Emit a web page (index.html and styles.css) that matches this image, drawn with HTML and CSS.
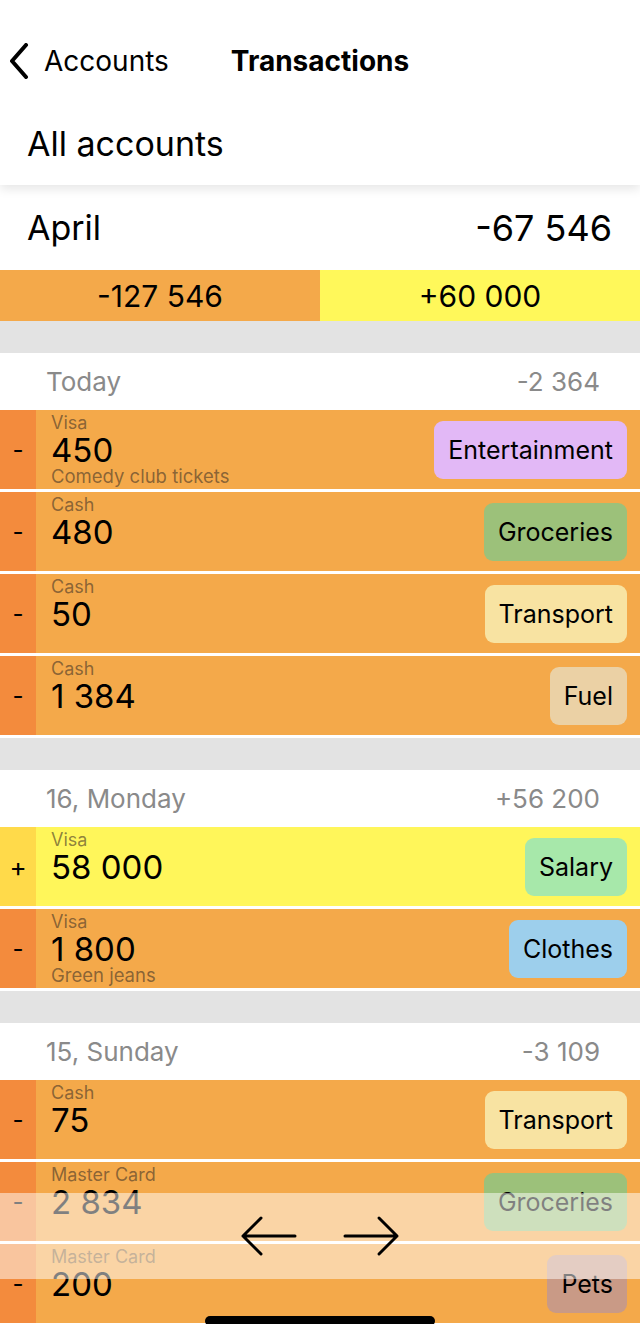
FILE: index.html
```html
<!DOCTYPE html>
<html>
<head>
<meta charset="utf-8">
<link rel="stylesheet" href="styles.css">
</head>
<body>
<div class="screen">
  <header class="header">
    <div class="nav">
      <div class="back">
        <svg class="chev" width="20" height="36" viewBox="0 0 20 36"><path d="M16 2 L2 18 L16 34" fill="none" stroke="#000" stroke-width="4" stroke-linecap="round" stroke-linejoin="round"/></svg>
        <span>Accounts</span>
      </div>
      <div class="nav-title">Transactions</div>
    </div>
    <div class="page-title">All accounts</div>
  </header>

  <div class="month">
    <span>April</span>
    <span class="month-total">-67 546</span>
  </div>
  <div class="split">
    <div class="split-out">-127 546</div>
    <div class="split-in">+60 000</div>
  </div>
  <div class="gap"></div>

  <div class="day"><span>Today</span><span>-2 364</span></div>
  <div class="tx out">
    <div class="sign">-</div>
    <div class="info"><div class="acct">Visa</div><div class="amt">450</div><div class="note">Comedy club tickets</div></div>
    <div class="tag ent">Entertainment</div>
  </div>
  <div class="tx out">
    <div class="sign">-</div>
    <div class="info"><div class="acct">Cash</div><div class="amt">480</div></div>
    <div class="tag gro">Groceries</div>
  </div>
  <div class="tx out">
    <div class="sign">-</div>
    <div class="info"><div class="acct">Cash</div><div class="amt">50</div></div>
    <div class="tag tra">Transport</div>
  </div>
  <div class="tx out">
    <div class="sign">-</div>
    <div class="info"><div class="acct">Cash</div><div class="amt">1 384</div></div>
    <div class="tag fue">Fuel</div>
  </div>
  <div class="gap"></div>

  <div class="day"><span>16, Monday</span><span>+56 200</span></div>
  <div class="tx in">
    <div class="sign">+</div>
    <div class="info"><div class="acct">Visa</div><div class="amt">58 000</div></div>
    <div class="tag sal">Salary</div>
  </div>
  <div class="tx out">
    <div class="sign">-</div>
    <div class="info"><div class="acct">Visa</div><div class="amt">1 800</div><div class="note">Green jeans</div></div>
    <div class="tag clo">Clothes</div>
  </div>
  <div class="gap"></div>

  <div class="day"><span>15, Sunday</span><span>-3 109</span></div>
  <div class="tx out">
    <div class="sign">-</div>
    <div class="info"><div class="acct">Cash</div><div class="amt">75</div></div>
    <div class="tag tra">Transport</div>
  </div>
  <div class="tx out">
    <div class="sign">-</div>
    <div class="info"><div class="acct">Master Card</div><div class="amt">2 834</div></div>
    <div class="tag gro">Groceries</div>
  </div>
  <div class="tx out">
    <div class="sign">-</div>
    <div class="info"><div class="acct">Master Card</div><div class="amt">200</div></div>
    <div class="tag pet">Pets</div>
  </div>

  <div class="pager">
    <svg width="160" height="44" viewBox="0 0 160 44">
      <path d="M3 22 H55 M21 4 L3 22 L21 40" fill="none" stroke="#000" stroke-width="3" stroke-linecap="round" stroke-linejoin="round"/>
      <path d="M105 22 H157 M139 4 L157 22 L139 40" fill="none" stroke="#000" stroke-width="3" stroke-linecap="round" stroke-linejoin="round"/>
    </svg>
  </div>
  <div class="home-bar"></div>
</div>
</body>
</html>
```

FILE: styles.css
```css
* { box-sizing: border-box; }
html, body { margin: 0; padding: 0; }
body {
  width: 640px;
  height: 1324px;
  overflow: hidden;
  background: #fff;
  font-family: "Inter", "Roboto", "Liberation Sans", sans-serif;
  color: #000;
}
.screen { position: relative; width: 640px; height: 1324px; overflow: hidden; }

.header {
  position: relative;
  z-index: 2;
  background: #fff;
  padding-top: 38px;
  height: 185px;
  box-shadow: 0 4px 10px rgba(0,0,0,0.10);
}
.nav {
  position: relative;
  height: 46px;
  display: flex;
  align-items: center;
}
.back {
  display: flex;
  align-items: center;
  padding-left: 10px;
  gap: 14px;
  font-size: 28px;
}
.chev { display: block; }
.nav-title {
  position: absolute;
  left: 0; right: 0;
  text-align: center;
  font-size: 28px;
  font-weight: 700;
  pointer-events: none;
}
.page-title {
  padding: 40px 0 0 27px;
  font-size: 34px;
  line-height: 40px;
}

.month {
  height: 85px;
  display: flex;
  align-items: center;
  justify-content: space-between;
  padding: 0 28px 0 27px;
  font-size: 34px;
}
.month-total { font-size: 36px; }
.split { display: flex; height: 51px; }
.split > div {
  flex: 1;
  display: flex;
  align-items: center;
  justify-content: center;
  font-size: 30px;
}
.split-out { background: #f4a94a; }
.split-in { background: #fff85a; }
.gap { height: 32px; background: #e3e3e3; }

.day {
  height: 57px;
  display: flex;
  align-items: center;
  justify-content: space-between;
  padding: 0 40px 0 46px;
  font-size: 26px;
  color: #8a8a8a;
}

.tx {
  height: 79px;
  margin-bottom: 3px;
  display: flex;
  align-items: center;
}
.tx.out { background: #f4a94a; }
.tx.in { background: #fff65a; }
.sign {
  width: 36px;
  align-self: stretch;
  display: flex;
  align-items: center;
  justify-content: center;
  font-size: 24px;
}
.tx.in .sign { font-size: 26px; }
.tx.out .sign { background: #f38b3d; }
.tx.in .sign { background: #ffda4a; }
.info {
  flex: 1;
  align-self: stretch;
  padding: 3px 0 0 15px;
  overflow: hidden;
}
.acct {
  font-size: 18px;
  line-height: 20px;
  color: rgba(70,55,40,0.62);
}
.amt {
  font-size: 33px;
  line-height: 34px;
}
.note {
  font-size: 18.5px;
  line-height: 18px;
  color: rgba(70,55,40,0.62);
}
.tag {
  height: 58px;
  margin-right: 13px;
  padding: 0 14px;
  border-radius: 9px;
  display: flex;
  align-items: center;
  font-size: 25px;
}
.ent { background: #e2b8f6; }
.gro { background: #9cc17a; }
.tra { background: #f8e3a2; }
.fue { background: #ebd1a5; }
.sal { background: #a7e8aa; }
.clo { background: #9dcfec; }
.pet { background: #c99a86; }

.pager {
  position: absolute;
  left: 0; right: 0;
  top: 1193px;
  height: 86px;
  background: rgba(255,255,255,0.5);
  display: flex;
  align-items: center;
  justify-content: center;
}
.pager svg { display: block; }
.home-bar {
  position: absolute;
  left: 205px;
  width: 230px;
  bottom: -2px;
  height: 10px;
  border-radius: 5px;
  background: #000;
}
```
